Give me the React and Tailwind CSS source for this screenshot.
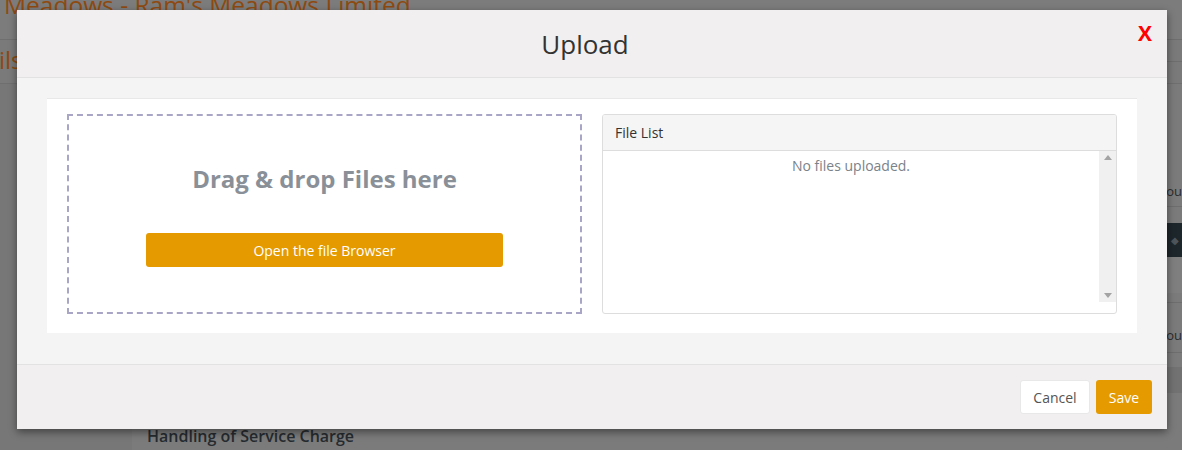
import React from 'react';

const font = { fontFamily: '"Open Sans", "Noto Sans", sans-serif' };

function Background() {
  return (
    <div className="absolute inset-0 flex flex-col bg-[#777777]">
      <div className="h-[40px] bg-[#7c7c7c] border-b border-[#6f6f6f] overflow-hidden">
        <div className="text-[24.5px] leading-[30px] -mt-[10px] pl-[4px] text-[#8e4a10] whitespace-nowrap">
          Meadows - Ram's Meadows Limited
        </div>
      </div>
      <div className="h-[44px] bg-[#7a7a7a] border-b border-[#6f6f6f] flex items-center overflow-hidden">
        <span className="text-[24px] -ml-[1px] -mt-[3px] text-[#8e4a10]">ils</span>
      </div>
      <div className="flex-1 flex">
        <div className="w-[132px] shrink-0" />
        <div className="flex-1 bg-[#7b7b7b] flex flex-col">
          <div className="flex-1" />
          <div className="h-[28px] pl-[15px] text-[16px] font-semibold text-[#262b30] leading-[28px]">
            Handling of Service Charge
          </div>
        </div>
      </div>
      <div className="absolute right-0 top-0 w-[15px] flex flex-col text-[13px] text-[#2b2b2b] overflow-hidden">
        <div className="h-[40px] border-b border-[#6e6e6e]" />
        <div className="h-[22px] border-b border-[#6e6e6e]" />
        <div className="h-[145px] border-b border-[#6e6e6e] flex items-end">
          <span className="-ml-[4px] leading-[30px] whitespace-nowrap">ious</span>
        </div>
        <div className="h-[16px]" />
        <div className="h-[34px] bg-[#1d262b] flex items-center justify-center">
          <span className="text-[10px] text-[#4e565b]">◆</span>
        </div>
        <div className="h-[36px] bg-[#7f7f7f]" />
        <div className="h-[10px] border-b border-[#6e6e6e]" />
        <div className="h-[50px] border-b border-[#6e6e6e] flex items-end">
          <span className="-ml-[4px] leading-[34px] whitespace-nowrap">ious</span>
        </div>
        <div className="h-[14px]" />
        <div className="h-[26px] bg-[#727272]" />
      </div>
    </div>
  );
}

function Modal() {
  return (
    <div className="absolute left-[17px] top-[10px] w-[1150px] h-[419px] flex flex-col bg-[#f1eff0] shadow-[0_3px_8px_rgba(0,0,0,0.45)]">
      <div className="relative h-[68px] shrink-0 flex items-center justify-center pr-[14px] border-b border-[#e2e2e2]">
        <h2 className="text-[26px] text-[#333333] leading-none pt-[1px]">Upload</h2>
        <button className="absolute right-[15px] top-[13px] text-[21px] font-bold text-[#ff0000] leading-none">X</button>
      </div>
      <div className="h-[287px] shrink-0 bg-[#f3f4f3] px-[30px] pt-[20px] border-b border-[#e2e2e2]">
        <div className="bg-white h-[235px] px-[20px] pt-[15px] flex gap-[20px] border-t border-[#e8e8e8]">
          <div className="w-[515px] h-[200px] border-2 border-dashed border-[#a8a5c6] flex flex-col items-center">
            <div className="mt-[51px] text-[24px] font-bold text-[#8a9098] leading-none">Drag &amp; drop Files here</div>
            <button className="mt-[42px] w-[357px] h-[34px] rounded-[3px] bg-[#e59a00] text-white text-[14px]">
              Open the file Browser
            </button>
          </div>
          <div className="flex-1 h-[200px] border border-[#dddddd] rounded-[3px] flex flex-col overflow-hidden">
            <div className="h-[36px] shrink-0 bg-[#f5f5f5] border-b border-[#dddddd] px-[12px] flex items-center text-[14px] text-[#333333]">
              File List
            </div>
            <div className="flex-1 flex">
              <div className="flex-1 text-center text-[14px] text-[#7a828a] pt-[4px]">No files uploaded.</div>
              <div className="w-[17px] h-[151px] bg-[#f0f0f0] flex flex-col items-center justify-between py-[4px]">
                <svg width="8" height="5" viewBox="0 0 8 5"><path d="M4 0 L8 5 L0 5 Z" fill="#a3a3a3" /></svg>
                <svg width="8" height="5" viewBox="0 0 8 5"><path d="M0 0 L8 0 L4 5 Z" fill="#a3a3a3" /></svg>
              </div>
            </div>
          </div>
        </div>
      </div>
      <div className="flex-1 flex items-start justify-end gap-[6px] pt-[15px] pr-[15px]">
        <button className="h-[34px] w-[70px] bg-white border border-[#e8e8e8] rounded-[3px] text-[14px] text-[#555555]">Cancel</button>
        <button className="h-[34px] w-[56px] bg-[#e59a00] rounded-[3px] text-[14px] text-white">Save</button>
      </div>
    </div>
  );
}

export default function App() {
  return (
    <div className="relative w-[1182px] h-[450px] overflow-hidden" style={font}>
      <Background />
      <Modal />
    </div>
  );
}
